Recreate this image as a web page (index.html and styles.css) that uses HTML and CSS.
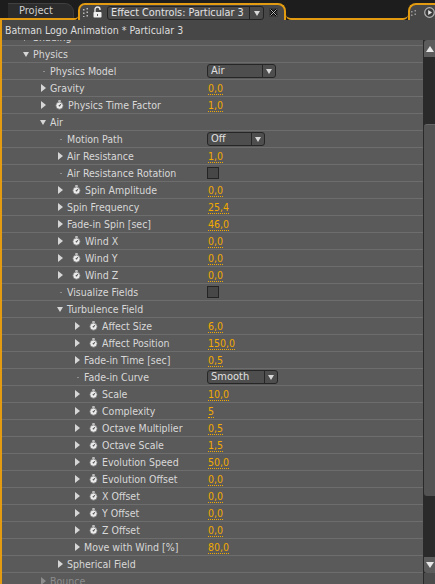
FILE: index.html
```html
<!DOCTYPE html>
<html>
<head>
<meta charset="utf-8">
<link rel="stylesheet" href="styles.css">
</head>
<body>
<svg class="defs" width="0" height="0">
  <defs>
    <symbol id="sw" viewBox="0 0 9 10">
      <rect x="3.3" y="0.2" width="2.4" height="1.8" fill="#d6d6d6"/>
      <circle cx="4.5" cy="5.6" r="3.6" fill="#ececec" stroke="#7c7c7c" stroke-width=".8"/>
      <path d="M4.5 5.6 L6.3 4" stroke="#4a4a4a" stroke-width="1"/>
      <circle cx="4.5" cy="5.6" r="0.9" fill="#5a5a5a"/>
    </symbol>
  </defs>
</svg>
<div class="app">
  <div class="tabbar">
    <div class="tab-left"><div class="tab-project">Project</div></div>
    <div class="tab-active">
      <svg class="grip" width="6" height="9" viewBox="0 0 6 9"><rect x="0" y="1" width="1.5" height="1.5" fill="#bbb"/><rect x="3.5" y="0" width="1.5" height="1.5" fill="#bbb"/><rect x="0" y="4.5" width="1.5" height="1.5" fill="#bbb"/><rect x="3.5" y="3.5" width="1.5" height="1.5" fill="#bbb"/><rect x="0" y="8" width="1.5" height="1" fill="#bbb"/><rect x="3.5" y="7" width="1.5" height="1.5" fill="#bbb"/></svg>
      <svg class="lock" width="9" height="12" viewBox="0 0 9 12"><path d="M2 6 V3.5 a2.5 2.5 0 0 1 5 0 V4" fill="none" stroke="#e8e8e8" stroke-width="1.4"/><rect x="0.5" y="6" width="8" height="5.5" rx="0.8" fill="#f0f0f0"/><rect x="4" y="8" width="1" height="2" fill="#555"/></svg>
      <div class="tab-dd"><span class="tab-dd-text">Effect Controls: Particular 3</span><span class="tab-dd-arrow"></span></div>
      <svg class="close" width="9" height="9" viewBox="0 0 9 9"><rect x="0" y="0" width="9" height="9" fill="#3a3a3a"/><path d="M1.5 1.5 L7.5 7.5 M7.5 1.5 L1.5 7.5" stroke="#000" stroke-width="2.2"/><path d="M1.5 1.5 L7.5 7.5 M7.5 1.5 L1.5 7.5" stroke="#e0e0e0" stroke-width=".8"/></svg>
    </div>
    <div class="tab-gap"></div>
    <div class="tab-right">
      <svg class="grip" width="6" height="6" viewBox="0 0 6 6"><rect x="0" y="1" width="1.5" height="1.5" fill="#999"/><rect x="3.5" y="0" width="1.5" height="1.5" fill="#999"/><rect x="0" y="4.5" width="1.5" height="1.5" fill="#999"/><rect x="3.5" y="3.5" width="1.5" height="1.5" fill="#999"/></svg>
      <svg class="play" width="11" height="11" viewBox="0 0 11 11"><circle cx="5.5" cy="5.5" r="4.8" fill="#3c3c3c" stroke="#b4b4b4" stroke-width="1.2"/><path d="M4.2 3 L8 5.5 L4.2 8 Z" fill="#e6e6e6"/></svg>
    </div>
  </div>

  <div class="panel">
    <div class="title">Batman Logo Animation * Particular 3</div>
    <div class="body">
      <div class="rows">
        <div class="row first"><div class="name l1"><span class="tw r"></span><span class="label">Shading</span></div></div>
        <div class="row"><div class="name l1"><span class="tw d"></span><span class="label">Physics</span></div></div>
        <div class="row"><div class="name l2"><span class="dot"></span><span class="label">Physics Model</span></div><div class="val"><div class="dd w69"><span class="dd-t">Air</span><span class="dd-a"></span></div></div></div>
        <div class="row"><div class="name l2"><span class="tw r"></span><span class="label">Gravity</span></div><div class="val"><span class="num">0,0</span></div></div>
        <div class="row"><div class="name l2"><span class="tw r"></span><svg class="sw"><use href="#sw"/></svg><span class="label">Physics Time Factor</span></div><div class="val"><span class="num">1,0</span></div></div>
        <div class="row"><div class="name l2"><span class="tw d"></span><span class="label">Air</span></div></div>
        <div class="row"><div class="name l3"><span class="dot"></span><span class="label">Motion Path</span></div><div class="val"><div class="dd w58"><span class="dd-t">Off</span><span class="dd-a"></span></div></div></div>
        <div class="row"><div class="name l3"><span class="tw r"></span><span class="label">Air Resistance</span></div><div class="val"><span class="num">1,0</span></div></div>
        <div class="row"><div class="name l3"><span class="dot"></span><span class="label">Air Resistance Rotation</span></div><div class="val"><span class="cb"></span></div></div>
        <div class="row"><div class="name l3"><span class="tw r"></span><svg class="sw"><use href="#sw"/></svg><span class="label">Spin Amplitude</span></div><div class="val"><span class="num">0,0</span></div></div>
        <div class="row"><div class="name l3"><span class="tw r"></span><span class="label">Spin Frequency</span></div><div class="val"><span class="num">25,4</span></div></div>
        <div class="row"><div class="name l3"><span class="tw r"></span><span class="label">Fade-in Spin [sec]</span></div><div class="val"><span class="num">46,0</span></div></div>
        <div class="row"><div class="name l3"><span class="tw r"></span><svg class="sw"><use href="#sw"/></svg><span class="label">Wind X</span></div><div class="val"><span class="num">0,0</span></div></div>
        <div class="row"><div class="name l3"><span class="tw r"></span><svg class="sw"><use href="#sw"/></svg><span class="label">Wind Y</span></div><div class="val"><span class="num">0,0</span></div></div>
        <div class="row"><div class="name l3"><span class="tw r"></span><svg class="sw"><use href="#sw"/></svg><span class="label">Wind Z</span></div><div class="val"><span class="num">0,0</span></div></div>
        <div class="row"><div class="name l3"><span class="dot"></span><span class="label">Visualize Fields</span></div><div class="val"><span class="cb"></span></div></div>
        <div class="row"><div class="name l3"><span class="tw d"></span><span class="label">Turbulence Field</span></div></div>
        <div class="row"><div class="name l4"><span class="tw r"></span><svg class="sw"><use href="#sw"/></svg><span class="label">Affect Size</span></div><div class="val"><span class="num">6,0</span></div></div>
        <div class="row"><div class="name l4"><span class="tw r"></span><svg class="sw"><use href="#sw"/></svg><span class="label">Affect Position</span></div><div class="val"><span class="num">150,0</span></div></div>
        <div class="row"><div class="name l4"><span class="tw r"></span><span class="label">Fade-in Time [sec]</span></div><div class="val"><span class="num">0,5</span></div></div>
        <div class="row"><div class="name l4"><span class="dot"></span><span class="label">Fade-in Curve</span></div><div class="val"><div class="dd w70"><span class="dd-t">Smooth</span><span class="dd-a"></span></div></div></div>
        <div class="row"><div class="name l4"><span class="tw r"></span><svg class="sw"><use href="#sw"/></svg><span class="label">Scale</span></div><div class="val"><span class="num">10,0</span></div></div>
        <div class="row"><div class="name l4"><span class="tw r"></span><svg class="sw"><use href="#sw"/></svg><span class="label">Complexity</span></div><div class="val"><span class="num">5</span></div></div>
        <div class="row"><div class="name l4"><span class="tw r"></span><svg class="sw"><use href="#sw"/></svg><span class="label">Octave Multiplier</span></div><div class="val"><span class="num">0,5</span></div></div>
        <div class="row"><div class="name l4"><span class="tw r"></span><svg class="sw"><use href="#sw"/></svg><span class="label">Octave Scale</span></div><div class="val"><span class="num">1,5</span></div></div>
        <div class="row"><div class="name l4"><span class="tw r"></span><svg class="sw"><use href="#sw"/></svg><span class="label">Evolution Speed</span></div><div class="val"><span class="num">50,0</span></div></div>
        <div class="row"><div class="name l4"><span class="tw r"></span><svg class="sw"><use href="#sw"/></svg><span class="label">Evolution Offset</span></div><div class="val"><span class="num">0,0</span></div></div>
        <div class="row"><div class="name l4"><span class="tw r"></span><svg class="sw"><use href="#sw"/></svg><span class="label">X Offset</span></div><div class="val"><span class="num">0,0</span></div></div>
        <div class="row"><div class="name l4"><span class="tw r"></span><svg class="sw"><use href="#sw"/></svg><span class="label">Y Offset</span></div><div class="val"><span class="num">0,0</span></div></div>
        <div class="row"><div class="name l4"><span class="tw r"></span><svg class="sw"><use href="#sw"/></svg><span class="label">Z Offset</span></div><div class="val"><span class="num">0,0</span></div></div>
        <div class="row"><div class="name l4"><span class="tw r"></span><span class="label">Move with Wind [%]</span></div><div class="val"><span class="num">80,0</span></div></div>
        <div class="row"><div class="name l3"><span class="tw r"></span><span class="label">Spherical Field</span></div></div>
        <div class="row off"><div class="name l2"><span class="tw r"></span><span class="label">Bounce</span></div></div>
      </div>
      <div class="scrollbar">
        <div class="sb-btn up"></div>
        <div class="sb-track top"></div>
        <div class="sb-thumb"></div>
        <div class="sb-track rest"></div>
        <div class="sb-btn down"></div>
        <div class="sb-foot"></div>
      </div>
    </div>
  </div>
</div>
</body>
</html>
```
FILE: styles.css
```css
* { box-sizing: border-box; }
html, body { margin: 0; padding: 0; }
body {
  width: 435px;
  height: 584px;
  overflow: hidden;
  background: #1d1d1d;
  font-family: "DejaVu Sans Condensed", "DejaVu Sans", sans-serif;
  font-size: 10.5px;
  color: #d8d8d8;
}
.defs { position: absolute; width: 0; height: 0; }
.app { display: flex; flex-direction: column; height: 584px; }

/* tab bar */
.tabbar {
  height: 20px;
  display: flex;
  align-items: flex-end;
  background: #1d1d1d;
}
.tab-left {
  width: 78px;
  height: 20px;
  border-bottom: 2px solid #e39c12;
  border-bottom-right-radius: 4px;
  padding: 3px 0 0 8px;
}
.tab-project {
  height: 15px;
  width: 66px;
  background: #2c2c2c;
  border-top: 1px solid #404040;
  border-right: 1px solid #3a3a3a;
  border-top-right-radius: 9px;
  padding-left: 11px;
  line-height: 14px;
  font-size: 11px;
  color: #d0d0d0;
}
.tab-active {
  width: 208px;
  height: 17px;
  border: 2px solid #e39c12;
  border-bottom: 0;
  border-radius: 7px 8px 0 0;
  background: #474747;
  display: flex;
  align-items: center;
  padding: 0 0 0 3px;
}
.tab-active .grip { margin-right: 4px; }
.tab-active .lock { margin-right: 5px; margin-top: -1px; }
.tab-dd {
  width: 157px;
  height: 14px;
  display: flex;
  border: 1px solid #232323;
  border-radius: 3px;
  background: #4a4a4a;
  margin-top: 1px;
}
.tab-dd-text {
  flex: 1;
  padding-left: 3px;
  line-height: 12px;
  font-size: 10.8px;
  color: #e2e2e2;
  white-space: nowrap;
}
.tab-dd-arrow {
  width: 14px;
  border-left: 1px solid #232323;
  display: flex;
  align-items: center;
  justify-content: center;
}
.tab-dd-arrow::before,
.dd-a::before {
  content: "";
  border-top: 5px solid #d8d8d8;
  border-left: 3.5px solid transparent;
  border-right: 3.5px solid transparent;
}
.close { margin-left: 5px; }
.tab-gap {
  flex: 1;
  height: 20px;
  border-bottom: 2px solid #e39c12;
  border-radius: 0 0 5px 5px;
}
.tab-right {
  width: 27px;
  height: 17px;
  border-top: 2px solid #e39c12;
  border-left: 2px solid #e39c12;
  border-top-left-radius: 8px;
  background: #474747;
  display: flex;
  align-items: center;
  padding-left: 1px;
  gap: 7px;
}

/* panel */
.panel {
  flex: 1;
  display: flex;
  flex-direction: column;
  border-left: 2px solid #e39c12;
  background: #474747;
  min-height: 0;
}
.title {
  height: 20px;
  line-height: 20px;
  padding-left: 3px;
  font-size: 10.5px;
  color: #dedede;
  white-space: nowrap;
}
.body {
  flex: 1;
  display: flex;
  min-height: 0;
  overflow: hidden;
}
.rows {
  flex: 1;
  background: #5a5a5a;
  overflow: hidden;
}
.row {
  height: 17px;
  border-bottom: 1px solid #6d6d6d;
  display: flex;
  align-items: center;
}
.row.first { margin-top: -11px; }
.name {
  width: 206px;
  display: flex;
  align-items: center;
  white-space: nowrap;
}
.l1 { padding-left: 22px; }
.l2 { padding-left: 39px; }
.l3 { padding-left: 56px; }
.l4 { padding-left: 73px; }
.label { line-height: 16px; }
.tw {
  width: 9px;
  height: 16px;
  display: flex;
  align-items: center;
}
.tw.r::before {
  content: "";
  border-left: 5px solid #d6d6d6;
  border-top: 4px solid transparent;
  border-bottom: 4px solid transparent;
}
.tw.d::before {
  content: "";
  border-top: 5px solid #d6d6d6;
  border-left: 3.5px solid transparent;
  border-right: 3.5px solid transparent;
  margin-left: -1px;
}
.dot {
  width: 9px;
  height: 16px;
  display: flex;
  align-items: center;
}
.dot::before {
  content: "";
  width: 2px;
  height: 1px;
  margin-left: 2px;
  background: #8e8e8e;
}
.sw {
  width: 9px;
  height: 10px;
  margin: 0 4px 0 5px;
}
.val {
  display: flex;
  align-items: center;
  height: 16px;
}
.num {
  color: #f2aa00;
  line-height: 11px;
  border-bottom: 1px dotted #f2aa00;
  margin-top: 1px;
}
.dd {
  height: 14px;
  display: flex;
  border: 1px solid #262626;
  border-radius: 3px;
  background: #4e4e4e;
  margin-left: -1px;
}
.w69 { width: 69px; }
.w58 { width: 58px; }
.w70 { width: 71px; }
.dd-t {
  flex: 1;
  padding-left: 3px;
  line-height: 12px;
  font-size: 11px;
  color: #e0e0e0;
}
.dd-a {
  width: 13px;
  border-left: 1px solid #262626;
  display: flex;
  align-items: center;
  justify-content: center;
}
.cb {
  width: 12px;
  height: 12px;
  border: 1px solid #242424;
  background: #474747;
  margin-left: -1px;
}
.row.off .label { color: #8c8c8c; }
.row.off .tw.r::before { border-left-color: #8c8c8c; }

/* scrollbar */
.scrollbar {
  width: 12px;
  display: flex;
  flex-direction: column;
  border-left: 1px solid #2a2a2a;
  background: #2a2a2a;
}
.sb-btn {
  display: flex;
  align-items: center;
  justify-content: center;
  background: #5c5c5c;
}
.sb-btn.up { height: 17px; border-radius: 3px 0 0 0; }
.sb-btn.down { height: 16px; border-radius: 0 0 0 3px; }
.sb-btn.up::before {
  content: "";
  border-bottom: 6px solid #e6e6e6;
  border-left: 4.5px solid transparent;
  border-right: 4.5px solid transparent;
}
.sb-btn.down::before {
  content: "";
  border-top: 6px solid #e6e6e6;
  border-left: 4.5px solid transparent;
  border-right: 4.5px solid transparent;
}
.sb-track.top { height: 67px; }
.sb-thumb {
  height: 372px;
  background: #535353;
  border-top: 1px solid #666;
  border-radius: 3px 0 0 3px;
}
.sb-track.rest { flex: 1; }
.sb-foot { height: 11px; background: #4c4c4c; }
```
